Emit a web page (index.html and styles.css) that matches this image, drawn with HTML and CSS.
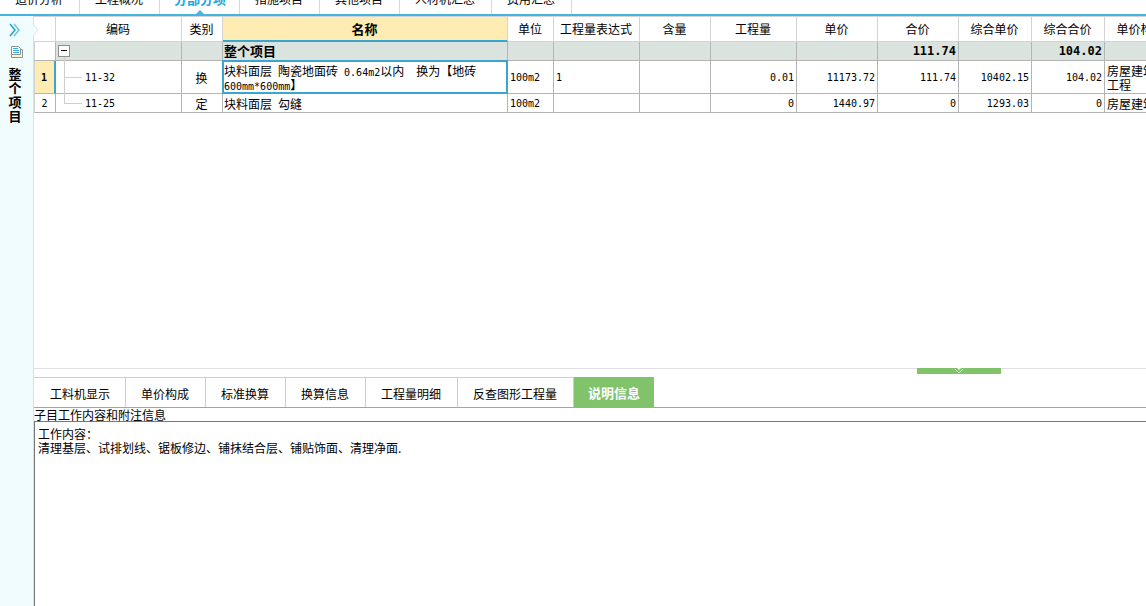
FILE: index.html
```html
<!DOCTYPE html>
<html lang="zh-CN">
<head>
<meta charset="utf-8">
<title>分部分项</title>
<link rel="stylesheet" href="styles.css">
</head>
<body>
<div class="app">
  <nav class="top-tabs">
    <button class="top-tab">造价分析</button>
    <button class="top-tab">工程概况</button>
    <button class="top-tab active">分部分项</button>
    <button class="top-tab">措施项目</button>
    <button class="top-tab">其他项目</button>
    <button class="top-tab">人材机汇总</button>
    <button class="top-tab">费用汇总</button>
  </nav>
  <div class="body">
    <aside class="sidebar">
      <button class="side-button" aria-label="展开">
        <svg width="12" height="14" viewBox="0 0 12 14" fill="none" stroke-width="1.5"><path d="M1 1l5 6-5 6" stroke="#229fd0"/><path d="M5 1l5 6-5 6" stroke="#6cc4e4"/></svg>
      </button>
      <svg class="doc-icon" width="12" height="12" viewBox="0 0 12 12" fill="none"><path d="M3.500 3.500h8v8h-11v-3" fill="#fff3c4" stroke="#8b949b"/><path d="M.5.500h7l2 2v6h-9z" fill="#fff" stroke="#8b949b"/><path d="M2 2.500h5M2 4.500h6M2 6.500h6" stroke="#36aee0"/></svg>
      <div class="side-title">整个项目</div>
      <svg class="notch" width="6" height="12" viewBox="0 0 6 12"><path d="M0 0l5 6-5 6z" fill="#f1fcff"/><path d="M0 0l5 6-5 6" fill="none" stroke="#dce4e8"/></svg>
    </aside>
    <main class="main">
      <section class="grid-pane">
        <table class="grid">
          <colgroup>
            <col class="c-no"><col class="c-code"><col class="c-type"><col class="c-name"><col class="c-unit"><col class="c-expr"><col class="c-content"><col class="c-qty"><col class="c-price"><col class="c-price"><col class="c-full"><col class="c-full"><col class="c-file">
          </colgroup>
          <thead>
            <tr><th></th><th>编码</th><th>类别</th><th class="current">名称</th><th>单位</th><th>工程量表达式</th><th>含量</th><th>工程量</th><th>单价</th><th>合价</th><th>综合单价</th><th>综合合价</th><th>单价构成文件</th></tr>
          </thead>
          <tbody>
            <tr class="total"><td></td><td class="tree-root"><button class="toggle" aria-label="折叠"></button></td><td></td><td>整个项目</td><td></td><td></td><td></td><td></td><td></td><td class="num">111.74</td><td></td><td class="num">104.02</td><td></td></tr>
            <tr class="tall"><td class="row-no marked">1</td><td class="tree latin">11-32</td><td class="mid">换</td><td class="selected">块料面层<span class="latin"> </span>陶瓷地面砖<span class="latin"> 0.64m2</span>以内　换为【地砖<br><span class="latin">600mm*600mm</span>】</td><td class="latin">100m2</td><td class="latin">1</td><td></td><td class="num">0.01</td><td class="num">11173.72</td><td class="num">111.74</td><td class="num">10402.15</td><td class="num">104.02</td><td>房屋建筑与装饰工程</td></tr>
            <tr class="short"><td class="row-no">2</td><td class="tree last latin">11-25</td><td class="mid">定</td><td>块料面层<span class="latin"> </span>勾缝</td><td class="latin">100m2</td><td></td><td></td><td class="num">0</td><td class="num">1440.97</td><td class="num">0</td><td class="num">1293.03</td><td class="num">0</td><td>房屋建筑与装饰工程</td></tr>
          </tbody>
        </table>
      </section>
      <section class="detail-pane">
        <button class="handle" aria-label="收起">
          <svg width="10" height="6" viewBox="0 0 10 6" fill="none" stroke="#d3ecca"><path d="M3 0h4L5 2z" fill="#fff" stroke="none"/><path d="M1 1l4 4 4-4"/></svg>
        </button>
        <nav class="tabs">
          <button class="tab">工料机显示</button>
          <button class="tab">单价构成</button>
          <button class="tab">标准换算</button>
          <button class="tab">换算信息</button>
          <button class="tab">工程量明细</button>
          <button class="tab">反查图形工程量</button>
          <button class="tab active">说明信息</button>
        </nav>
        <label class="note-label" for="note">子目工作内容和附注信息</label>
        <textarea class="note" id="note" readonly>工作内容：
清理基层、试排划线、锯板修边、铺抹结合层、铺贴饰面、清理净面.</textarea>
      </section>
    </main>
  </div>
</div>
</body>
</html>
```

FILE: styles.css
```css
* { box-sizing: border-box; }

body {
  margin: 0;
  background: #fff;
  color: #000;
  font: 12px/14px "Noto Sans CJK SC", sans-serif;
}

button {
  margin: 0;
  padding: 0;
  border: 0;
  background: none;
  color: inherit;
  font: inherit;
}

.app {
  display: flex;
  flex-direction: column;
  height: 100vh;
  overflow: hidden;
}

/* module tabs, scrolled partly out of view */
.top-tabs {
  display: flex;
  align-items: flex-end;
  flex: none;
  height: 16px;
  overflow: hidden;
  border-bottom: 2px solid #44b4e0;
}

.top-tab {
  position: relative;
  flex: none;
  height: 30px;
  padding: 0 16px 0 15px;
  border-right: 1px solid #d8d8d8;
}

.top-tab.active {
  padding: 0 13px 0 14px;
  color: #1ba4e2;
  font-size: 13px;
  font-weight: bold;
}

.top-tab.active::after {
  content: "";
  position: absolute;
  bottom: 0;
  left: 50%;
  margin-left: -4px;
  border: 4px solid transparent;
  border-top: 0;
  border-bottom-color: #44b4e0;
}

.body {
  display: flex;
  flex: 1;
  min-height: 0;
}

.sidebar {
  position: relative;
  display: flex;
  flex-direction: column;
  align-items: center;
  flex: none;
  width: 34px;
  padding: 7px 3px 0 0;
  border-right: 1px solid #dcdfe2;
  background: #f1fcff;
}

.side-button { height: 14px; }
.side-button svg { display: block; }
.doc-icon { margin: 9px 0 0 3px; }

.side-title {
  width: 13px;
  margin-top: 9px;
  font-size: 13px;
  font-weight: bold;
  word-break: break-all;
}

.notch {
  position: absolute;
  top: 8px;
  left: 33px;
}

.main {
  display: grid;
  grid-template-rows: 352fr 238fr;
  flex: 1;
  min-width: 0;
}

.grid-pane {
  min-height: 0;
  overflow: hidden;
}

.grid {
  width: 1168px;
  table-layout: fixed;
  border-collapse: separate;
  border-spacing: 0;
}

.c-no { width: 22px; }
.c-code { width: 126px; }
.c-type { width: 41px; }
.c-name { width: 285px; }
.c-unit { width: 46px; }
.c-expr, .c-qty { width: 86px; }
.c-content { width: 71px; }
.c-price { width: 81px; }
.c-full { width: 73px; }
.c-file { width: 97px; }

.grid th {
  height: 26px;
  padding: 0 1px 0 0;
  border: solid #d3d3d3;
  border-width: 1px 1px 1px 0;
  font-weight: normal;
}

.grid .current {
  border-bottom: 2px solid #3aa6cf;
  background: #ffecb2;
  font-size: 13px;
  font-weight: bold;
}

.grid td {
  padding: 2px 2px 0 1px;
  border: solid #b4b4b4;
  border-width: 0 1px 1px 0;
  white-space: nowrap;
}

.grid td:first-child { border-left: 1px solid #d3d3d3; }
.grid td:last-child { padding-left: 2px; }

.total { height: 19px; }
.grid .total td {
  padding-top: 0;
  background: #dbe3df;
  font-size: 13px;
  font-weight: bold;
}
.grid .total td:first-child { background: #fff; }
.tall { height: 33px; }
.grid .tall td:last-child { white-space: normal; }
.short { height: 19px; }

.grid .latin, .grid .num, .grid .row-no {
  font-family: "DejaVu Sans Mono", "Noto Sans CJK SC", monospace;
  font-size: 10px;
}

.grid .latin { padding-left: 2px; }
.grid .num { text-align: right; }
.grid .total .num { font-size: 12px; }
.grid .mid, .grid .row-no { text-align: center; }

.grid span.latin {
  padding: 0;
  line-height: 10px;
  white-space: pre;
}

.grid .marked {
  border-right: 2px solid #3aa6cf;
  background: #ffecb2;
  font-weight: bold;
}

.grid .selected { position: relative; }

.selected::after {
  content: "";
  position: absolute;
  inset: -1px;
  border: 2px solid #3aa6cf;
}

.tree-root, .tree { position: relative; }
.grid .tree { padding-left: 29px; }

.toggle {
  position: absolute;
  top: 3px;
  left: 2px;
  width: 12px;
  height: 12px;
  border: 1px solid #8f8f8f;
  background: #fff;
}

.toggle::before {
  content: "";
  position: absolute;
  top: 4px;
  left: 2px;
  width: 6px;
  height: 1px;
  background: #000;
}

.tree-root::after {
  content: "";
  position: absolute;
  top: 15px;
  bottom: -1px;
  left: 8px;
  border-left: 1px solid #cfcfcf;
}

.tree::before {
  content: "";
  position: absolute;
  top: 0;
  bottom: -1px;
  left: 8px;
  border-left: 1px solid #cfcfcf;
}

.tree::after {
  content: "";
  position: absolute;
  top: 50%;
  left: 8px;
  width: 18px;
  border-top: 1px solid #cfcfcf;
}

.last::before { bottom: 50%; }

.detail-pane {
  position: relative;
  display: flex;
  flex-direction: column;
  min-height: 0;
  padding-top: 8px;
  border-top: 1px solid #e0e0e0;
}

.handle {
  position: absolute;
  top: -1px;
  right: 13%;
  width: 84px;
  height: 6px;
  background: #80c36b;
}

.handle svg { display: block; margin: auto; }

.tabs {
  display: flex;
  flex: none;
  height: 31px;
  border-bottom: 1px solid #7fc46c;
}

.tab {
  padding: 2px 16px 0 15px;
  border: solid #b8e2a4;
  border-width: 1px 1px 0 0;
}

.tab:first-child { padding: 2px 15px 0 16px; }

.tab.active {
  padding: 0 13px 0 14px;
  border-color: #80c36b;
  background: #80c36b;
  color: #fff;
  font-size: 13px;
  font-weight: bold;
}

.note-label {
  flex: none;
  height: 13px;
  line-height: 14px;
}

.note {
  display: block;
  flex: 1;
  min-height: 0;
  margin: 0;
  padding: 5px 3px;
  border: solid #777;
  border-width: 1px 0 0 1px;
  border-radius: 0;
  outline: 0;
  background: #fff;
  color: #000;
  font: inherit;
  resize: none;
}
```
